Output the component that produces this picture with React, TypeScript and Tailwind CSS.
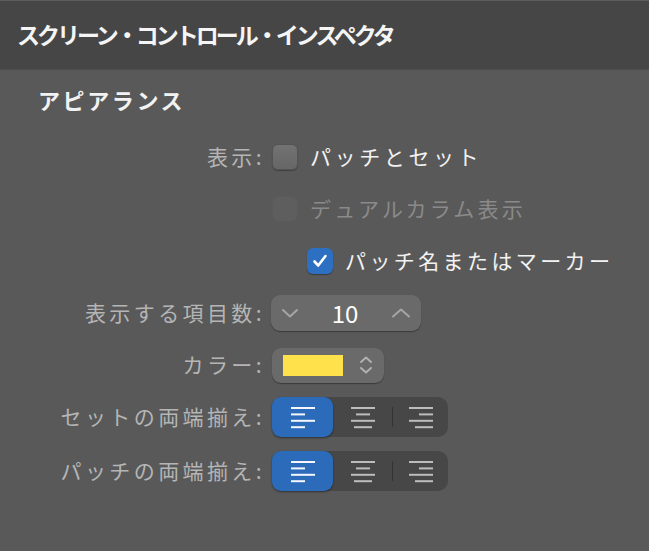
import React from 'react';

const font = { fontFamily: '"Noto Sans CJK JP", "Noto Sans", sans-serif' };

function Label({ children }: { children: React.ReactNode }) {
  return (
    <div className="w-[265px] shrink-0 text-right text-[21px] tracking-[3.4px] text-[#b5b5b5]">
      {children}
    </div>
  );
}

function Checkbox({ checked, disabled }: { checked?: boolean; disabled?: boolean }) {
  if (checked) {
    return (
      <div className="w-[26px] h-[26px] rounded-[6px] bg-[#2d6fc0] shadow-[0_1px_1px_rgba(0,0,0,0.35)] flex items-center justify-center">
        <svg width="18" height="18" viewBox="0 0 18 18">
          <path d="M3.5 9.5 L7.2 13.5 L14.5 4" fill="none" stroke="white" strokeWidth="2.6" strokeLinecap="round" strokeLinejoin="round" />
        </svg>
      </div>
    );
  }
  return (
    <div
      className={
        disabled
          ? 'w-[26px] h-[26px] rounded-[6px] bg-[#5e5e5e] border border-[#5a5a5a]'
          : 'w-[26px] h-[26px] rounded-[6px] bg-gradient-to-b from-[#727272] to-[#666666] border border-[#545454] shadow-[0_1px_1px_rgba(0,0,0,0.3)]'
      }
    />
  );
}

function AlignIcon({ kind, color }: { kind: 'left' | 'center' | 'right'; color: string }) {
  const long = 24;
  const short = 14;
  const mid = 18;
  const widths = kind === 'left' ? [long, short, long, short] : [long, short, long, mid];
  return (
    <svg width="26" height="24" viewBox="0 0 26 24">
      {widths.map((w, i) => {
        const x = kind === 'left' ? 1 : kind === 'center' ? 1 + (long - w) / 2 : 1 + long - w;
        return <rect key={i} x={x} y={2 + i * 6.4} width={w} height="2" fill={color} />;
      })}
    </svg>
  );
}

function Segmented() {
  return (
    <div className="w-[176px] h-[40px] rounded-[10px] bg-[#474747] flex items-stretch">
      <div className="w-[61px] rounded-[9px] bg-[#2b6bb9] shadow-[0_1px_2px_rgba(0,0,0,0.45)] flex items-center justify-center">
        <AlignIcon kind="left" color="#f4f7fb" />
      </div>
      <div className="w-[59px] flex items-center justify-center">
        <AlignIcon kind="center" color="#bcbcbc" />
      </div>
      <div className="w-px my-[10px] bg-[#333333]" />
      <div className="flex-1 flex items-center justify-center">
        <AlignIcon kind="right" color="#bcbcbc" />
      </div>
    </div>
  );
}

export default function App() {
  return (
    <div className="w-[649px] h-[551px] bg-[#595959] overflow-hidden" style={font}>
      {/* Header */}
      <div className="h-[68px] bg-[#464646] border-t border-[#5c5c5c] shadow-[0_1px_2px_rgba(0,0,0,0.35)] flex items-center pl-[17px]">
        <h1 className="text-[23px] font-bold tracking-[-3px] text-[#f5f5f5]">スクリーン・コントロール・インスペクタ</h1>
      </div>

      {/* Section */}
      <div className="h-[63px] flex items-center pl-[38px]">
        <h2 className="text-[22px] font-bold tracking-[2.6px] text-[#f2f2f2]">アピアランス</h2>
      </div>

      <div className="flex flex-col">
        <div className="h-[52px] flex items-center">
          <Label>表示:</Label>
          <div className="ml-[7px] flex items-center gap-[12px]">
            <Checkbox />
            <span className="text-[21px] tracking-[3.6px] text-[#f2f2f2]">パッチとセット</span>
          </div>
        </div>

        <div className="h-[52px] flex items-center">
          <Label>{''}</Label>
          <div className="ml-[7px] flex items-center gap-[12px]">
            <Checkbox disabled />
            <span className="text-[21px] tracking-[3.2px] text-[#8a8a8a]">デュアルカラム表示</span>
          </div>
        </div>

        <div className="h-[52px] flex items-center">
          <Label>{''}</Label>
          <div className="ml-[42px] flex items-center gap-[12px]">
            <Checkbox checked />
            <span className="text-[21px] tracking-[3.4px] text-[#f2f2f2]">パッチ名またはマーカー</span>
          </div>
        </div>

        <div className="h-[52px] flex items-center">
          <Label>表示する項目数:</Label>
          <div className="ml-[6px] w-[150px] h-[36px] rounded-[9px] bg-[#6a6a6a] shadow-[0_1px_1px_rgba(0,0,0,0.35)] flex items-center justify-between px-[10px]">
            <svg width="18" height="12" viewBox="0 0 18 12">
              <path d="M2 3 L9 9.5 L16 3" fill="none" stroke="#a5a5a5" strokeWidth="2" strokeLinecap="round" strokeLinejoin="round" />
            </svg>
            <span className="text-[24px] text-white leading-none">10</span>
            <svg width="20" height="12" viewBox="0 0 20 12">
              <path d="M2 9.5 L10 2.5 L18 9.5" fill="none" stroke="#a5a5a5" strokeWidth="2" strokeLinecap="round" strokeLinejoin="round" />
            </svg>
          </div>
        </div>

        <div className="h-[52px] flex items-center">
          <Label>カラー:</Label>
          <div className="ml-[7px] w-[112px] h-[35px] rounded-[9px] bg-[#6a6a6a] shadow-[0_1px_1px_rgba(0,0,0,0.35)] flex items-center pl-[11px] pr-[10px] justify-between">
            <div className="w-[60px] h-[21px] bg-[#fee14b]" />
            <svg width="16" height="20" viewBox="0 0 16 20">
              <path d="M3 7 L8 2.5 L13 7" fill="none" stroke="#b0b0b0" strokeWidth="2" strokeLinecap="round" strokeLinejoin="round" />
              <path d="M3 13 L8 17.5 L13 13" fill="none" stroke="#b0b0b0" strokeWidth="2" strokeLinecap="round" strokeLinejoin="round" />
            </svg>
          </div>
        </div>

        <div className="h-[52px] flex items-center">
          <Label>セットの両端揃え:</Label>
          <div className="ml-[7px]">
            <Segmented />
          </div>
        </div>

        <div className="h-[56px] flex items-center">
          <Label>パッチの両端揃え:</Label>
          <div className="ml-[7px]">
            <Segmented />
          </div>
        </div>
      </div>
    </div>
  );
}
